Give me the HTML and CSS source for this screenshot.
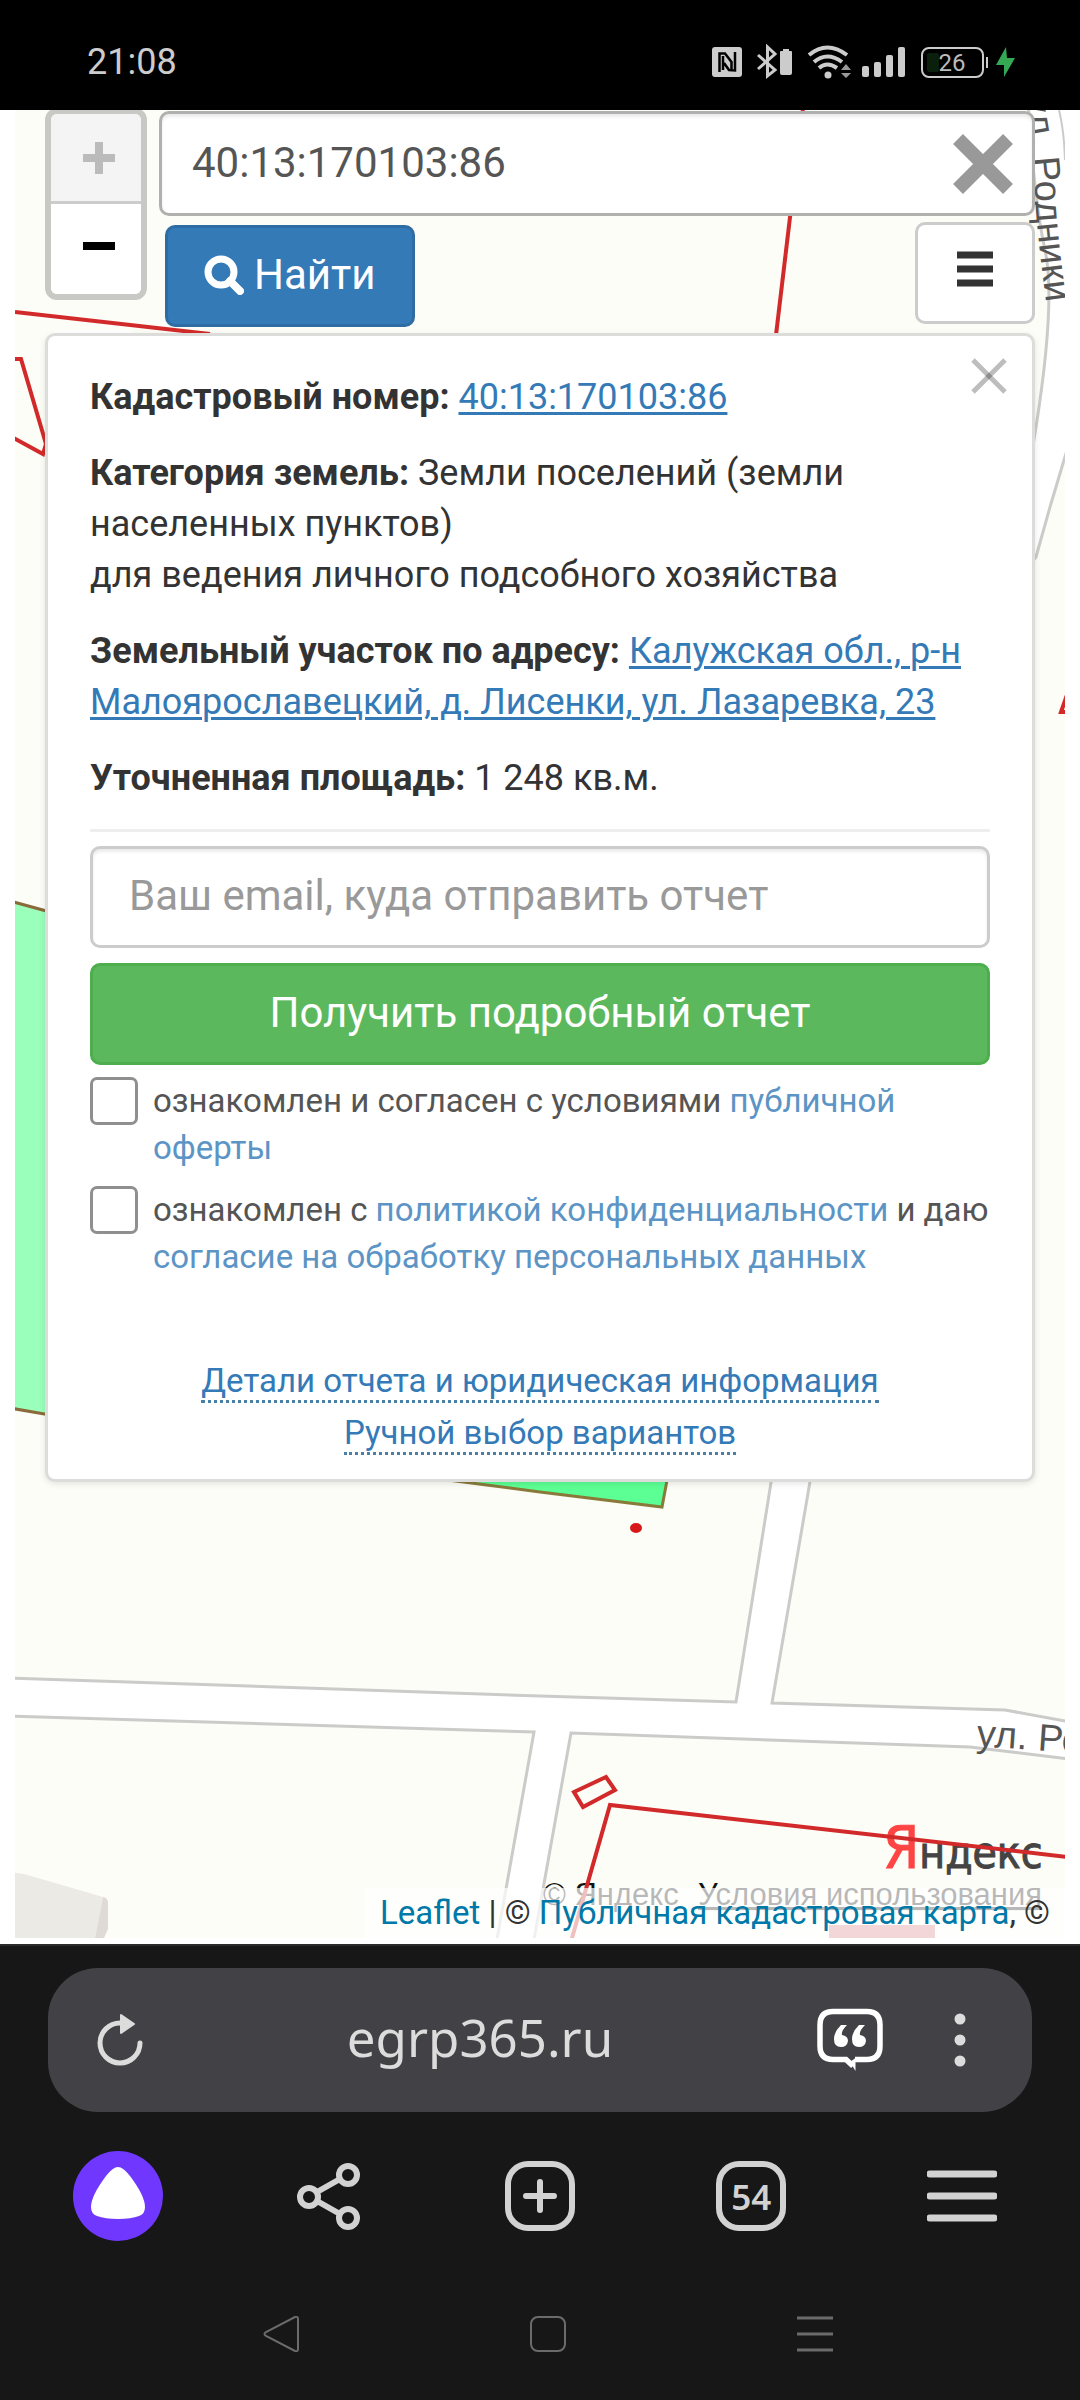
FILE: index.html
```html
<!DOCTYPE html>
<html lang="ru">
<head>
    <meta charset="UTF-8">
    <meta name="viewport" content="width=device-width, initial-scale=1.0">
    <title>egrp365.ru</title>
    <link rel="stylesheet" href="styles.css">
</head>
<body>

<header class="status-bar">
    <span class="clock">21:08</span>
    <svg class="status-icons" viewBox="0 0 306 36" width="306" height="36">
        <!-- NFC -->
        <rect x="1" y="3" width="30" height="30" rx="3" fill="#ccc"/>
        <path d="M8.500 28V9.500L14 9.500 20.500 18V27M12 12V26M24 8V26.500L18 26 13 19" fill="none" stroke="#000" stroke-width="2.500"/>
        <!-- bluetooth -->
        <path d="M47 11L64 26 56.500 32V3L64 10 47 25" fill="none" stroke="#ccc" stroke-width="3"/>
        <path d="M72 5h6v2h2q1 0 1 1v21q0 2-2 2h-8q-2 0-2-2V8q0-1 1-1h2z" fill="#ccc"/>
        <!-- wifi -->
        <path d="M98 11q18-15 38 0M103 18q13-11 28 0M108 24q8-7 18 0" fill="none" stroke="#ccc" stroke-width="4"/>
        <circle cx="117" cy="31" r="3.500" fill="#ccc"/>
        <path d="M130 26l5-6 5 6zM130 29l5 5 5-5z" fill="#999"/>
        <!-- signal -->
        <g fill="#ccc">
            <rect x="151" y="22" width="7" height="11" rx="2"/>
            <rect x="163" y="18" width="7" height="15" rx="2"/>
            <rect x="175" y="11" width="7" height="22" rx="2"/>
            <rect x="187" y="3" width="7" height="30" rx="2"/>
        </g>
        <!-- battery -->
        <rect x="211" y="4" width="61" height="29" rx="7" fill="none" stroke="#ccc" stroke-width="2"/>
        <rect x="216" y="9" width="12" height="19" rx="2" fill="#0a1f0c"/>
        <rect x="275" y="13" width="2" height="11" fill="#ccc"/>
        <text x="241" y="27" class="battery-level">26</text>
        <path d="M295 3L285 21h8v12L304 14h-8z" fill="#35a853"/>
    </svg>
</header>

<main class="page">
    <div class="map">
        <svg class="map-tiles" viewBox="15 110 1050 1828" preserveAspectRatio="xMidYMin slice" aria-hidden="true">
            <rect x="15" y="110" width="1050" height="1828" fill="#fcfdf7"/>

            <!-- roads -->
            <g fill="#fff" stroke="#cbcbc9" stroke-width="3">
                <path d="M1028 100Q1034 200 1045 250T1036 427L1010 590 1036 557 1050 507 1070 440V100z"/>
                <path d="M10 1678L540 1696 736 1702 773 1470H812L772 1703 1005 1710 1070 1722V1759L970 1747 571 1733 533 1945H496L534 1732 10 1716z"/>
            </g>
            <path d="M1059 110Q1064 130 1065 160" fill="none" stroke="#cbcbc9" stroke-width="2"/>

            <!-- building -->
            <path d="M10 1872L24 1874 103 1897 95 1938H10z" fill="#eceae5"/>
            <path d="M103 1897Q108 1898 108 1903V1929L104 1938H95z" fill="#dfdad6"/>

            <!-- land plots -->
            <path d="M10 901L50 912V1415L10 1408z" fill="#99ffbb" stroke="#8a6a3a" stroke-width="3"/>
            <path d="M440 1479L540 1492 662 1507 668 1475z" fill="#5cff94" stroke="#8a7a3a" stroke-width="3"/>

            <!-- street names -->
            <path id="street" d="M1020 85Q1034 150 1035 190T1050 330" fill="none"/>
            <text class="street"><textPath href="#street" startOffset="12">ул. Родники</textPath></text>
            <text class="street" transform="translate(976 1746) rotate(4)">ул. Родники</text>

            <!-- Yandex mark -->
            <text x="883" y="1868" class="ya-logo"><tspan class="ya-first">Я</tspan>ндекс</text>
            <text x="543" y="1905" class="ya-copy">© Яндекс</text>
            <text x="698" y="1905" class="ya-copy ya-terms">Условия использования</text>

            <!-- plot borders -->
            <g fill="none" stroke="#d22a2a" stroke-width="4">
                <path d="M15 312L210 334"/>
                <path d="M803 108L776 335"/>
                <path d="M10 359H21L46 444 43 454 10 436"/>
                <path d="M574 1792L606 1777 615 1790 583 1807z"/>
                <path d="M570 1945L610 1805 1068 1857"/>
                <path d="M1068 692L1061 712H1068"/>
            </g>
            <ellipse cx="636" cy="1528" rx="6" ry="5" fill="#d81818"/>
            <rect x="829" y="1925" width="106" height="13" fill="#d7767e"/>
            <rect x="50" y="330" width="84" height="20" rx="8" fill="#fff"/>
        </svg>

        <div class="overlay">
            <div class="top">
                <div class="zoom">
                    <button class="zoom-btn zoom-in" aria-label="Приблизить" disabled>
                        <svg viewBox="0 0 32 32" width="32" height="32"><path d="M16 0V32M0 16H32" stroke="#bbb" stroke-width="8"/></svg>
                    </button>
                    <button class="zoom-btn" aria-label="Отдалить">
                        <svg viewBox="0 0 32 32" width="32" height="32"><path d="M0 16H32" stroke="#000" stroke-width="8"/></svg>
                    </button>
                </div>
                <form class="search">
                    <div class="search-box">
                        <input class="field" type="text" value="40:13:170103:86" aria-label="Кадастровый номер или адрес">
                        <button class="clear" type="reset" aria-label="Очистить">
                            <svg viewBox="0 0 60 60" width="60" height="60"><path d="M5 5L55 55M55 5L5 55" stroke="#999" stroke-width="14"/></svg>
                        </button>
                    </div>
                    <div class="search-actions">
                        <button class="btn btn-find" type="button">
                            <svg viewBox="0 0 40 40" width="40" height="40"><circle cx="17" cy="17" r="13" fill="none" stroke="#fff" stroke-width="7"/><path d="M26 26L36 36" stroke="#fff" stroke-width="8" stroke-linecap="round"/></svg>
                            Найти
                        </button>
                        <button class="btn btn-menu" type="button" aria-label="Меню">
                            <svg viewBox="0 0 36 36" width="36" height="36"><path d="M0 4H36M0 18H36M0 32H36" stroke="#333" stroke-width="7"/></svg>
                        </button>
                    </div>
                </form>
            </div>

            <section class="panel">
                <button class="close" aria-label="Закрыть">
                    <svg viewBox="0 0 36 36" width="36" height="36"><path d="M2 2L34 34" stroke="#000" stroke-opacity="0.260" stroke-width="5"/><path d="M34 2L2 34" stroke="#000" stroke-opacity="0.260" stroke-width="5"/></svg>
                </button>
                <p><b>Кадастровый номер:</b> <a href="#">40:13:170103:86</a></p>
                <p><b>Категория земель:</b> Земли поселений (земли населенных пунктов)<br>для ведения личного подсобного хозяйства</p>
                <p><b>Земельный участок по адресу:</b> <a href="#">Калужская обл., р-н Малоярославецкий, д. Лисенки, ул. Лазаревка, 23</a></p>
                <p><b>Уточненная площадь:</b> 1 248 кв.м.</p>
                <hr>
                <form class="order">
                    <input class="field" type="email" placeholder="Ваш email, куда отправить отчет" aria-label="Ваш email">
                    <button class="btn btn-report" type="button">Получить подробный отчет</button>
                    <div class="agree">
                        <input type="checkbox" id="offer">
                        <label for="offer">ознакомлен и согласен с условиями <a href="#">публичной оферты</a></label>
                    </div>
                    <div class="agree">
                        <input type="checkbox" id="privacy">
                        <label for="privacy">ознакомлен с <a href="#">политикой конфиденциальности</a> и даю <a href="#">согласие на обработку персональных данных</a></label>
                    </div>
                </form>
                <div class="more">
                    <a href="#">Детали отчета и юридическая информация</a><br>
                    <a href="#">Ручной выбор вариантов</a>
                </div>
            </section>

            <div class="attribution"><a href="#">Leaflet</a> | © <a href="#">Публичная кадастровая карта</a>, ©</div>
        </div>
    </div>
</main>

<footer class="browser">
    <div class="omnibox">
        <button class="icon-btn" aria-label="Обновить">
            <svg viewBox="0 0 46 54" width="46" height="54"><path d="M43 30A20 20 0 1 1 23 10" fill="none" stroke="#dcdcdc" stroke-width="5" stroke-linecap="round"/><path d="M24 2L37 11 24 20z" fill="#dcdcdc" stroke="#dcdcdc" stroke-width="2" stroke-linejoin="round"/></svg>
        </button>
        <a class="url" href="#">egrp365.ru</a>
        <button class="icon-btn" aria-label="Отзывы">
            <svg viewBox="0 0 66 64" width="66" height="64">
                <path d="M38 51.500H50Q63 51.500 63 38V17Q63 3.500 50 3.500H16Q3 3.500 3 17V38Q3 51.500 16 51.500H29L36 58" fill="none" stroke="#fff" stroke-width="5.500"/>
                <path d="M33 54L38.500 50V63z" fill="#fff"/>
                <path d="M30 17Q24 23 25 27Q31 28 31 33Q30 39 24 39Q17 39 17 31Q17 24 24 17zM48 17Q42 23 43 27Q49 28 49 33Q48 39 42 39Q35 39 35 31Q35 24 42 17z" fill="#fff"/>
            </svg>
        </button>
        <button class="icon-btn" aria-label="Ещё">
            <svg viewBox="0 0 12 54" width="12" height="54" fill="#dcdcdc"><circle cx="6" cy="6" r="5.500"/><circle cx="6" cy="27" r="5.500"/><circle cx="6" cy="48" r="5.500"/></svg>
        </button>
    </div>

    <nav class="toolbar">
        <button class="icon-btn" aria-label="Алиса">
            <svg viewBox="0 0 90 90" width="90" height="90"><circle cx="45" cy="45" r="45" fill="#7038ff"/><path d="M45 16Q50 16 57 25Q72 45 72 56Q72 63 66 65Q58 68 45 68T24 65Q18 63 18 56Q18 45 33 25Q40 16 45 16z" fill="#fff"/></svg>
        </button>
        <button class="icon-btn" aria-label="Поделиться">
            <svg viewBox="0 0 64 68" width="64" height="68" fill="none" stroke="#d2d2d2"><path d="M20 30L43 17M20 39L43 52" stroke-width="6"/><g stroke-width="6"><circle cx="12" cy="35" r="9"/><circle cx="51" cy="13" r="9"/><circle cx="51" cy="56" r="9"/></g></svg>
        </button>
        <button class="icon-btn" aria-label="Новая вкладка">
            <svg viewBox="0 0 70 70" width="70" height="70" fill="none" stroke="#d2d2d2" stroke-width="6"><rect x="3" y="3" width="64" height="64" rx="20"/><path d="M35 21V49M21 35H49" stroke-linecap="round"/></svg>
        </button>
        <button class="icon-btn tabs" aria-label="Вкладки">54</button>
        <button class="icon-btn" aria-label="Меню браузера">
            <svg viewBox="0 0 70 52" width="70" height="52"><path d="M3 4H67M3 26H67M3 48H67" stroke="#d2d2d2" stroke-width="7" stroke-linecap="round"/></svg>
        </button>
    </nav>

    <nav class="system-nav">
        <button class="icon-btn" aria-label="Назад">
            <svg viewBox="0 0 36 36" width="36" height="36"><path d="M32 1Q35 0 35 3V33Q35 36 32 35L3 20Q0 18 3 16z" fill="none" stroke="#6b6b6b" stroke-width="2"/></svg>
        </button>
        <button class="icon-btn" aria-label="Домой">
            <svg viewBox="0 0 36 36" width="36" height="36"><rect x="1" y="1" width="34" height="34" rx="7" fill="none" stroke="#6b6b6b" stroke-width="2"/></svg>
        </button>
        <button class="icon-btn" aria-label="Недавние">
            <svg viewBox="0 0 36 36" width="36" height="36"><path d="M0 2H36M0 18H36M0 34H36" stroke="#6b6b6b" stroke-width="3"/></svg>
        </button>
    </nav>
</footer>

</body>
</html>
```

FILE: styles.css
```css
:root {
    --link: #337ab7;
    --text: #333;
    --muted: #555;
    --radius: 10px;
}

* {
    box-sizing: border-box;
}

body {
    margin: 0;
    min-height: 100vh;
    display: flex;
    flex-direction: column;
    font-family: Roboto, "Noto Sans", sans-serif;
    font-size: 36px;
    line-height: 51px;
    color: var(--text);
    background: #fff;
}

button, input {
    font-family: inherit;
    margin: 0;
}

button {
    padding: 0;
    border: none;
    background: none;
    cursor: pointer;
}

svg {
    display: block;
}

a {
    color: var(--link);
}

/* status bar */
.status-bar {
    display: flex;
    align-items: center;
    justify-content: space-between;
    height: 110px;
    padding: 14px 63px 0 87px;
    background: #000;
}

.clock {
    color: #ccc;
}

.battery-level {
    font-size: 24px;
    text-anchor: middle;
    fill: #bbb;
}

/* map */
.page {
    flex: 1;
    display: flex;
    padding: 0 15px 6px;
}

.map {
    position: relative;
    flex: 1;
    display: flex;
    overflow: hidden;
}

.map-tiles {
    position: absolute;
    top: 0;
    left: 0;
    width: 100%;
    height: 100%;
}

.street {
    font-family: "Liberation Sans", sans-serif;
    font-size: 38px;
    fill: #555;
}

.ya-logo {
    font-family: "Liberation Sans Narrow", "DejaVu Sans Condensed", sans-serif;
    font-size: 44px;
    fill: #444;
    stroke: #444;
}

.ya-first {
    font-size: 58px;
    fill: #f44;
    stroke: #f44;
}

.ya-copy {
    font-family: "Liberation Sans", sans-serif;
    font-size: 31px;
    fill: #111;
}

.ya-terms {
    text-decoration: underline;
}

.overlay {
    position: relative;
    flex: 1;
    display: flex;
    flex-direction: column;
    padding: 0 30px;
}

.top {
    display: flex;
    align-items: flex-start;
    gap: 12px;
}

.zoom {
    width: 102px;
    margin-top: -2px;
    border: 6px solid #c8c9c5;
    border-radius: 12px;
    overflow: hidden;
}

.zoom-btn {
    display: flex;
    align-items: center;
    justify-content: center;
    width: 100%;
    height: 90px;
    padding: 0 0 6px 6px;
    background: #fff;
}

.zoom-in {
    padding-bottom: 0;
    background: #f4f4f4;
    border-bottom: 3px solid #ccc;
}

.search {
    flex: 1;
    padding: 1px 0 6px;
}

.search-box {
    position: relative;
}

.field {
    display: block;
    width: 100%;
    height: 102px;
    padding: 0 36px 3px;
    border: 3px solid #ccc;
    border-radius: var(--radius);
    background: #fff;
    box-shadow: inset 0 3px 3px rgba(0, 0, 0, 0.08);
    font-size: 42px;
    color: var(--muted);
}

.field::placeholder {
    color: #999;
    opacity: 1;
}

.search .field {
    height: 105px;
    padding: 0 96px 3px 30px;
    border-color: #b0b0ae;
}

.clear {
    position: absolute;
    top: 23px;
    right: 22px;
}

.search-actions {
    display: flex;
    align-items: flex-end;
    justify-content: space-between;
    padding: 6px 0 0 6px;
}

.btn {
    display: flex;
    align-items: center;
    justify-content: center;
    gap: 10px;
    height: 102px;
    padding-bottom: 3px;
    border: 3px solid;
    border-radius: var(--radius);
    font-size: 42px;
    color: #fff;
}

.btn-find {
    margin-top: 3px;
    padding: 0 36px 3px;
    background: #337ab7;
    border-color: #2e6da4;
}

.btn-menu {
    align-self: flex-start;
    width: 120px;
    padding-bottom: 8px;
    background: #fff;
    border-color: #ccc;
}

/* object card */
.panel {
    position: relative;
    padding: 36px 42px 20px;
    background: #fff;
    border: 3px solid #dcdcda;
    border-radius: var(--radius);
    box-shadow: 0 2px 6px rgba(0, 0, 0, 0.1);
}

.close {
    position: absolute;
    top: 22px;
    right: 25px;
}

.panel p {
    margin: 0 0 25px;
}

.panel p a {
    text-decoration-thickness: 3px;
    text-underline-offset: 3px;
}

hr {
    margin: 0 0 14px;
    border: none;
    border-top: 3px solid #eee;
}

.order {
    display: flex;
    flex-direction: column;
    gap: 15px;
}

.btn-report {
    margin-bottom: -3px;
    background: #5cb85c;
    border-color: #4cae4c;
}

.agree {
    display: flex;
    align-items: flex-start;
    gap: 15px;
    font-size: 33px;
    line-height: 47px;
    color: var(--muted);
}

.agree input {
    appearance: none;
    flex: none;
    width: 48px;
    height: 48px;
    border: 3px solid #8f8f8f;
    border-radius: 7px;
    background: #fff;
}

.agree a {
    color: #5c95c5;
    text-decoration: none;
}

.more {
    margin-top: 75px;
    text-align: center;
    font-size: 33px;
    line-height: 52px;
}

.more a {
    text-decoration: none;
    border-bottom: 3px dotted #4a7fa8;
}

.attribution {
    align-self: flex-end;
    margin: auto -30px 0 0;
    padding: 0 15px;
    background: rgba(255, 255, 255, 0.7);
    font-size: 33px;
    line-height: 50px;
}

.attribution a {
    color: #0078a8;
    text-decoration: none;
}

/* browser chrome */
.browser {
    padding-top: 22px;
    background: #171717;
    border-top: 2px solid #2a2a2c;
}

.icon-btn {
    display: flex;
    align-items: center;
    justify-content: center;
}

.omnibox {
    display: flex;
    align-items: center;
    height: 144px;
    margin: 0 48px;
    padding: 0 66px 0 49px;
    border-radius: 50px;
    background: #424145;
}

.url {
    flex: 1;
    padding-bottom: 6px;
    font-family: "Noto Sans", sans-serif;
    font-size: 51px;
    color: #dcdcdc;
    text-align: center;
    text-decoration: none;
}

.omnibox .icon-btn:last-child {
    margin-left: 71px;
}

.toolbar {
    display: grid;
    grid-template-columns: repeat(5, 1fr);
    align-items: center;
    justify-items: center;
    padding: 39px 12px 75px;
}

.tabs {
    width: 70px;
    height: 70px;
    border: 6px solid #d2d2d2;
    border-radius: 23px;
    font-family: "Noto Sans", sans-serif;
    font-size: 35px;
    font-weight: 600;
    color: #d2d2d2;
}

.system-nav {
    display: grid;
    grid-template-columns: repeat(3, 1fr);
    justify-items: center;
    padding: 0 132px 48px 147px;
}
```
